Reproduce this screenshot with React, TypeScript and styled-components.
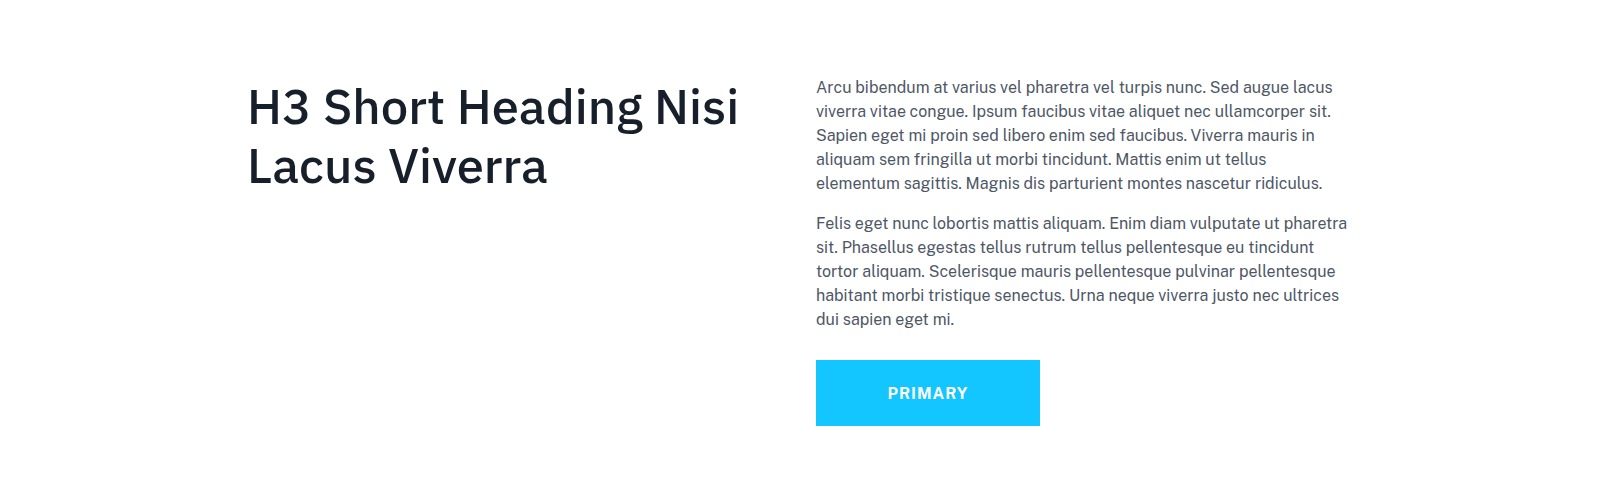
import React from "react";
import styled, { createGlobalStyle } from "styled-components";

const GlobalStyle = createGlobalStyle`
  html, body { margin: 0; padding: 0; background: #ffffff; }
  * { box-sizing: border-box; }
`;

const Section = styled.section`
  width: 100%;
  padding: 76px 0 75px;
  background: #ffffff;
`;

const Container = styled.div`
  width: 1106px;
  margin: 0 auto;
  display: grid;
  grid-template-columns: 1fr 1fr;
  column-gap: 32px;
  align-items: start;
`;

const Heading = styled.h3`
  margin: 0;
  padding-top: 1px;
  font-family: "IBM Plex Sans", Inter, "Noto Sans", sans-serif;
  font-weight: 500;
  font-size: 49px;
  line-height: 1.2;
  color: #171f2b;
  letter-spacing: 0;
`;

const Body = styled.div`
  display: flex;
  flex-direction: column;
  align-items: flex-start;
`;

const Paragraph = styled.p`
  margin: 0 0 16px;
  font-family: "Public Sans", Roboto, "Noto Sans", sans-serif;
  font-size: 16px;
  line-height: 24px;
  color: #4e5766;
  &:last-of-type { margin-bottom: 0; }
`;

const Button = styled.button`
  margin-top: 28px;
  width: 224px;
  height: 66px;
  border: none;
  border-radius: 0;
  background: #14c6ff;
  color: #ffffff;
  font-family: "Public Sans", Roboto, "Noto Sans", sans-serif;
  font-weight: 700;
  font-size: 16px;
  letter-spacing: 1px;
  text-transform: uppercase;
  cursor: pointer;
`;

export default function App() {
  return (
    <>
      <GlobalStyle />
      <Section>
        <Container>
          <Heading>H3 Short Heading Nisi Lacus Viverra</Heading>
          <Body>
            <Paragraph>
              Arcu bibendum at varius vel pharetra vel turpis nunc. Sed augue lacus viverra vitae congue. Ipsum faucibus vitae aliquet nec ullamcorper sit. Sapien eget mi proin sed libero enim sed faucibus. Viverra mauris in aliquam sem fringilla ut morbi tincidunt. Mattis enim ut tellus elementum sagittis. Magnis dis parturient montes nascetur ridiculus.
            </Paragraph>
            <Paragraph>
              Felis eget nunc lobortis mattis aliquam. Enim diam vulputate ut pharetra sit. Phasellus egestas tellus rutrum tellus pellentesque eu tincidunt tortor aliquam. Scelerisque mauris pellentesque pulvinar pellentesque habitant morbi tristique senectus. Urna neque viverra justo nec ultrices dui sapien eget mi.
            </Paragraph>
            <Button>Primary</Button>
          </Body>
        </Container>
      </Section>
    </>
  );
}
